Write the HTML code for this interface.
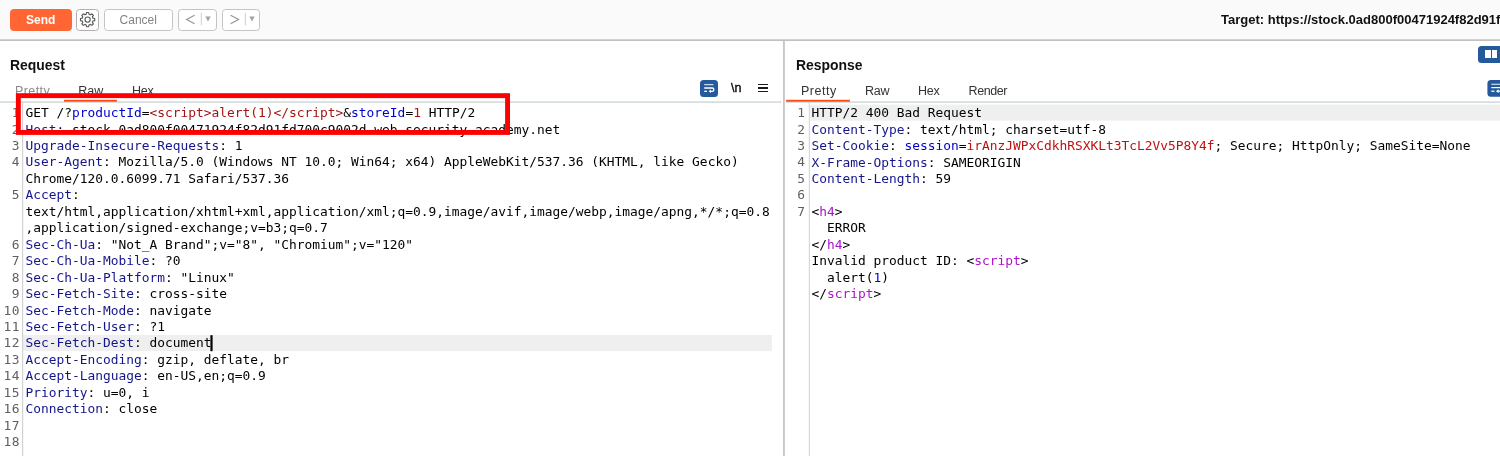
<!DOCTYPE html>
<html lang="en">
<head>
<meta charset="utf-8">
<title>Burp Repeater</title>
<style>
*{box-sizing:border-box;margin:0;padding:0}
html,body{width:1500px;height:456px;overflow:hidden;background:#fff}
body{position:relative;will-change:transform;font-family:"Liberation Sans","DejaVu Sans",sans-serif;color:#222}
.abs{position:absolute}
#toolbar{left:0;top:0;width:1500px;height:40px;background:#fafafa}
#tbline{left:0;top:39.3px;width:1500px;height:1.8px;background:#c8c2c2}
.btn{position:absolute;top:9px;height:21.5px;border:1px solid #c4c4c4;border-radius:3.5px;background:#fff;color:#848484;font-size:12px;line-height:21.3px;text-align:center}
#send{left:10px;width:61.5px;background:#ff6633;border-color:#ff6633;color:#fff;font-weight:bold;font-size:12px}
#gear{left:76px;width:22.6px;border-color:#b4aeae}
#cancel{left:104px;width:68.5px}
#prev{left:178px;width:38.5px}
#next{left:222px;width:38.4px}
.h{position:absolute;font-weight:bold;font-size:14px;line-height:16px;color:#111;white-space:pre}
.tab{position:absolute;font-size:12.5px;line-height:15px;color:#333;white-space:pre}
.code{position:absolute;font-family:"DejaVu Sans Mono","Liberation Mono",monospace;font-size:12.885px;line-height:16.46px;white-space:pre;color:#000}
.ln{position:absolute;font-family:"DejaVu Sans Mono","Liberation Mono",monospace;font-size:12.885px;line-height:16.46px;white-space:pre;color:#606060;text-align:right}
.n{color:#16168c}.p{color:#0000d0}.v{color:#a31515}.r{color:#c01010}.t{color:#ac14c8}.b{color:#0000ff}
</style>
</head>
<body>
<div id="toolbar" class="abs"></div>
<svg class="abs" style="left:0;top:0" width="1500" height="456" viewBox="0 0 1500 456">
<rect x="0" y="39.3" width="1500" height="1.7" fill="#c6bfbf"/>
<rect x="783.1" y="41" width="1.7" height="415" fill="#c6c0c0"/>
<rect x="0" y="101.3" width="781.2" height="1.6" fill="#d3dbdb"/>
<rect x="786" y="101.3" width="714" height="1.6" fill="#d3dbdb"/>
<rect x="64" y="99.8" width="52.9" height="1.9" fill="#ff4a14"/>
<rect x="786.1" y="99.8" width="63.8" height="1.9" fill="#ff4a14"/>
<rect x="23.2" y="335.05" width="748.65" height="16.1" fill="#efefef"/>
<rect x="810.3" y="104.6" width="690" height="16.1" fill="#efefef"/>
<rect x="210.4" y="335.2" width="2.2" height="16" fill="#000"/>
<rect x="22" y="103" width="1.2" height="353" fill="#d2d2d2"/>
<rect x="808.8" y="103" width="1.2" height="353" fill="#d8d8d8"/>
</svg>
<div id="send" class="btn">Send</div>
<div id="gear" class="btn"></div>
<svg class="abs" style="left:77px;top:9px" width="22" height="22" viewBox="0 0 22 22"><g transform="translate(10.6 10.6)" fill="none" stroke="#5a5a5a" stroke-width="1.15" stroke-linejoin="round"><path d="M-1.42 -5.31 L-1.06 -7.12 L1.06 -7.12 L1.42 -5.31 L2.75 -4.76 L4.28 -5.79 L5.79 -4.28 L4.76 -2.75 L5.31 -1.42 L7.12 -1.06 L7.12 1.06 L5.31 1.42 L4.76 2.75 L5.79 4.28 L4.28 5.79 L2.75 4.76 L1.42 5.31 L1.06 7.12 L-1.06 7.12 L-1.42 5.31 L-2.75 4.76 L-4.28 5.79 L-5.79 4.28 L-4.76 2.75 L-5.31 1.42 L-7.12 1.06 L-7.12 -1.06 L-5.31 -1.42 L-4.76 -2.75 L-5.79 -4.28 L-4.28 -5.79 L-2.75 -4.76Z"/><circle cx="0" cy="0" r="2.6"/></g></svg>
<div id="cancel" class="btn">Cancel</div>
<div id="prev" class="btn"></div>
<svg class="abs" style="left:178px;top:9px" width="40" height="22" viewBox="0 0 40 22"><path d="M16.6 6.2L8.6 10.5L16.6 14.8" fill="none" stroke="#969696" stroke-width="1.2"/><path d="M23.3 3.8v12.6" stroke="#cfcfcf" stroke-width="1"/><path d="M27.3 7.4h5.4l-2.7 5z" fill="#a4a4a4"/></svg>
<div id="next" class="btn"></div>
<svg class="abs" style="left:222px;top:9px" width="40" height="22" viewBox="0 0 40 22"><path d="M8.6 6.2L16.6 10.5L8.6 14.8" fill="none" stroke="#969696" stroke-width="1.2"/><path d="M23.3 3.8v12.6" stroke="#cfcfcf" stroke-width="1"/><path d="M27.3 7.4h5.4l-2.7 5z" fill="#a4a4a4"/></svg>
<div class="h" style="left:1221px;top:12px;font-size:13px">Target: https://stock.0ad800f00471924f82d91fd700c9002d.web-security-academy.net</div>

<!-- Request panel -->
<div class="h" style="left:10px;top:57.3px;font-size:14.6px;transform:scaleX(0.955);transform-origin:0 0">Request</div>
<div class="tab" style="left:15px;top:84.4px;color:#8a8a8a;letter-spacing:0.4px">Pretty</div>
<div class="tab" style="left:78.2px;top:84.4px">Raw</div>
<div class="tab" style="left:132px;top:84.4px;letter-spacing:-0.3px">Hex</div>
<div class="ln" style="left:0;top:105.1px;width:19.9px;letter-spacing:0.5px">1
2
3
4

5


6
7
8
9
10
11
12
13
14
15
16
17
18</div>
<div class="code" style="left:25.5px;top:105.1px">GET /?<span class="p">productId</span>=<span class="v">&lt;script&gt;alert(1)&lt;/script&gt;</span>&amp;<span class="p">storeId</span>=<span class="v">1</span> HTTP/2
<span class="n">Host</span>: stock.0ad800f00471924f82d91fd700c9002d.web-security-academy.net
<span class="n">Upgrade-Insecure-Requests</span>: 1
<span class="n">User-Agent</span>: Mozilla/5.0 (Windows NT 10.0; Win64; x64) AppleWebKit/537.36 (KHTML, like Gecko)
Chrome/120.0.6099.71 Safari/537.36
<span class="n">Accept</span>:
text/html,application/xhtml+xml,application/xml;q=0.9,image/avif,image/webp,image/apng,*/*;q=0.8
,application/signed-exchange;v=b3;q=0.7
<span class="n">Sec-Ch-Ua</span>: "Not_A Brand";v="8", "Chromium";v="120"
<span class="n">Sec-Ch-Ua-Mobile</span>: ?0
<span class="n">Sec-Ch-Ua-Platform</span>: "Linux"
<span class="n">Sec-Fetch-Site</span>: cross-site
<span class="n">Sec-Fetch-Mode</span>: navigate
<span class="n">Sec-Fetch-User</span>: ?1
<span class="n">Sec-Fetch-Dest</span>: document
<span class="n">Accept-Encoding</span>: gzip, deflate, br
<span class="n">Accept-Language</span>: en-US,en;q=0.9
<span class="n">Priority</span>: u=0, i
<span class="n">Connection</span>: close</div>

<!-- request toolbar icons -->
<div class="abs" style="left:700.1px;top:80.1px;width:17.7px;height:16.7px;border-radius:3.5px;background:#245a9c"></div>
<svg class="abs" style="left:700px;top:80px" width="18" height="17" viewBox="0 0 18 17"><g fill="none" stroke="#fff" stroke-width="1.3"><path d="M4.2 4.6h9.2" stroke="#c9d6e6"/><path d="M4.2 8h8a1.65 1.65 0 0 1 0 3.3h-1.6"/><path d="M4.2 11.3h2.8"/></g><path d="M11 9.6v3.4l-2.4-1.7z" fill="#fff"/></svg>
<div class="tab" style="left:731px;top:81px;color:#000;font-size:12.5px;-webkit-text-stroke:0.3px #000">\n</div>
<div class="abs" style="left:758.2px;top:83.9px;width:9.8px;height:1.35px;background:#1a1a1a"></div>
<div class="abs" style="left:758.2px;top:87.3px;width:9.8px;height:1.35px;background:#1a1a1a"></div>
<div class="abs" style="left:758.2px;top:90.7px;width:9.8px;height:1.35px;background:#1a1a1a"></div>

<!-- red annotation -->
<svg class="abs" style="left:0;top:80px" width="530" height="70" viewBox="0 80 530 70"><rect x="18.35" y="95.65" width="489.2" height="36.8" fill="none" stroke="#ff0000" stroke-width="4.9"/></svg>

<!-- splitter -->

<!-- Response panel -->
<div class="h" style="left:796px;top:57.3px;font-size:14.6px;transform:scaleX(0.955);transform-origin:0 0">Response</div>
<div class="tab" style="left:800.9px;top:83.8px;letter-spacing:0.55px">Pretty</div>
<div class="tab" style="left:865px;top:83.8px;letter-spacing:-0.3px">Raw</div>
<div class="tab" style="left:918px;top:83.8px;letter-spacing:-0.3px">Hex</div>
<div class="tab" style="left:968.5px;top:83.8px;letter-spacing:-0.4px">Render</div>
<div class="ln" style="left:786px;top:105.1px;width:19px">1
2
3
4
5
6
7</div>
<div class="code" style="left:811.5px;top:105.3px">HTTP/2 400 Bad Request
<span class="n">Content-Type</span>: text/html; charset=utf-8
<span class="n">Set-Cookie</span>: <span class="p">session</span>=<span class="r">irAnzJWPxCdkhRSXKLt3TcL2Vv5P8Y4f</span>; Secure; HttpOnly; SameSite=None
<span class="n">X-Frame-Options</span>: SAMEORIGIN
<span class="n">Content-Length</span>: 59

&lt;<span class="t">h4</span>&gt;
  ERROR
&lt;/<span class="t">h4</span>&gt;
Invalid product ID: &lt;<span class="t">script</span>&gt;
  alert(<span class="b">1</span>)
&lt;/<span class="t">script</span>&gt;</div>

<!-- right-edge icons -->
<div class="abs" style="left:1477.5px;top:45.5px;width:30px;height:17px;border-radius:3.5px;background:#245a9c"></div>
<div class="abs" style="left:1485px;top:49.5px;width:5.5px;height:8.5px;background:#fff"></div>
<div class="abs" style="left:1491.7px;top:49.5px;width:5.5px;height:8.5px;background:#fff"></div>
<svg class="abs" style="left:1480px;top:76px" width="20" height="24" viewBox="1480 76 20 24"><rect x="1487.4" y="80.1" width="20" height="16.6" rx="3.5" fill="#245a9c"/><g fill="none" stroke="#fff" stroke-width="1.25"><path d="M1491.3 84.3h9" stroke="#c9d6e6"/><path d="M1491.3 87.6h9"/><path d="M1491.3 91.2h3.2"/><path d="M1497.5 91.2h3"/></g><path d="M1498.6 89.3v3.8l-2.7-1.9z" fill="#fff"/></svg>
</body>
</html>
